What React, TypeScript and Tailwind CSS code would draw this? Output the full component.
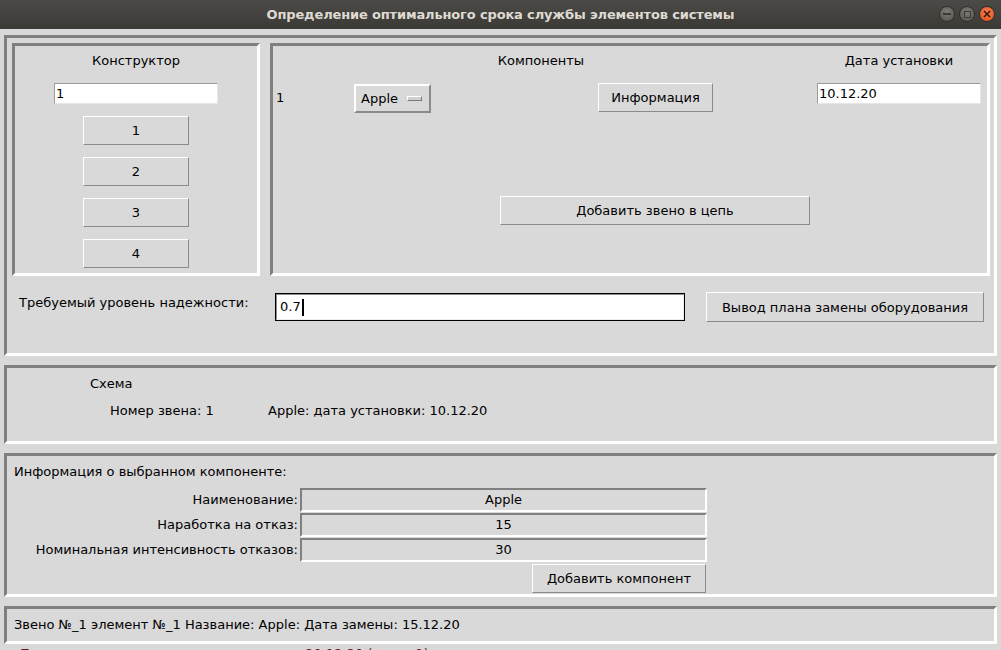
const font = "font-['DejaVu_Sans',sans-serif] text-[13px] text-black";
const sunken = "border-[3px] border-t-[#808080] border-l-[#808080] border-r-white border-b-white";
const raised = "border border-t-white border-l-white border-r-[#8a8a8a] border-b-[#8a8a8a] bg-[#d9d9d9] flex items-center justify-center leading-none";
const entry = "border border-t-[#9c9c9c] border-l-[#9c9c9c] border-r-[#e6e6e6] border-b-[#e6e6e6] bg-white pl-[1px] leading-[19px]";
const field = "border-[2px] border-t-[#808080] border-l-[#808080] border-r-white border-b-white flex items-center justify-center";

const WinButton = ({ kind }: { kind: "min" | "max" | "close" }) => {
  const bg =
    kind === "close"
      ? "bg-[radial-gradient(circle_at_50%_35%,#f47a4a,#e4521e)]"
      : "bg-[radial-gradient(circle_at_50%_35%,#7b7a75,#55544f)]";
  return (
    <div className={`w-[16px] h-[16px] rounded-full ${bg} border border-[#2f2e2b] flex items-center justify-center`}>
      {kind === "min" && <div className="w-[8px] h-[2px] bg-[#3a3935]" />}
      {kind === "max" && <div className="w-[7px] h-[7px] border border-[#3a3935]" />}
      {kind === "close" && (
        <svg width="8" height="8" viewBox="0 0 8 8">
          <path d="M1 1L7 7M7 1L1 7" stroke="#3a1a0e" strokeWidth="1.6" />
        </svg>
      )}
    </div>
  );
};

const App = () => {
  return (
    <div className={`w-[1001px] h-[650px] overflow-hidden bg-[#d9d9d9] ${font}`}>
      {/* title bar */}
      <div className="h-[29px] bg-[linear-gradient(#4b4a46,#3b3a36)] flex items-center relative">
        <div className="flex-1 text-center font-['DejaVu_Sans',sans-serif] font-bold text-[13px] text-[#dfdbd2] tracking-[-0.15px]">
          Определение оптимального срока службы элементов системы
        </div>
        <div className="absolute right-[6px] top-[6px] flex gap-[4px]">
          <WinButton kind="min" />
          <WinButton kind="max" />
          <WinButton kind="close" />
        </div>
      </div>

      <div className="px-[4px] pt-[6px] flex flex-col gap-[9px]">
        {/* section 1 */}
        <div className={`h-[321px] ${sunken} pt-[5px] pl-[5px]`}>
          <div className="flex gap-[10px]">
            <div className={`w-[248px] h-[233px] ${sunken} flex flex-col items-center pt-[7px]`}>
              <div className="leading-[16px]">Конструктор</div>
              <div className={`mt-[14px] w-[164px] h-[21px] ${entry}`}>1</div>
              <div className="mt-[12px] flex flex-col gap-[12px]">
                {["1", "2", "3", "4"].map((n) => (
                  <div key={n} className={`w-[106px] h-[29px] ${raised}`}>
                    {n}
                  </div>
                ))}
              </div>
            </div>
            <div className={`w-[720px] h-[233px] ${sunken} pt-[7px]`}>
              <div className="flex leading-[16px]">
                <div className="ml-[180px] w-[176px] text-center">Компоненты</div>
                <div className="ml-[188px] w-[164px] text-center">Дата установки</div>
              </div>
              <div className="mt-[14px] flex items-start">
                <div className="ml-[3px] w-[78px] mt-[7px] leading-[16px]">1</div>
                <div className="mt-[1px] w-[77px] h-[29px] border-2 border-t-white border-l-white border-r-[#8a8a8a] border-b-[#8a8a8a] flex items-center pl-[5px] gap-[9px] leading-none">
                  <span>Apple</span>
                  <div className="w-[15px] h-[5px] border border-t-white border-l-white border-r-[#7a7a7a] border-b-[#7a7a7a] bg-[#cfcfcf]" />
                </div>
                <div className={`ml-[167px] w-[115px] h-[29px] ${raised}`}>Информация</div>
                <div className={`ml-[104px] w-[164px] h-[21px] ${entry}`}>10.12.20</div>
              </div>
              <div className={`mt-[83px] ml-[227px] w-[310px] h-[29px] ${raised}`}>Добавить звено в цепь</div>
            </div>
          </div>
          <div className="mt-[16px] flex items-start pl-[7px]">
            <div className="w-[256px] mt-[3px] leading-[16px]">Требуемый уровень надежности:</div>
            <div className="mt-[1px] w-[410px] h-[28px] border border-black bg-white">
              <div className="h-full border border-t-[#8c8c8c] border-l-[#8c8c8c] border-r-[#ececec] border-b-[#ececec] flex items-center pl-[3px]">
                <span>0.7</span>
                <div className="w-[2px] h-[17px] bg-black ml-[1px]" />
              </div>
            </div>
            <div className={`ml-[21px] w-[278px] h-[30px] ${raised}`}>Вывод плана замены оборудования</div>
          </div>
        </div>

        {/* section 2 */}
        <div className={`h-[79px] ${sunken} pt-[8px] pl-[83px] leading-[16px]`}>
          <div>Схема</div>
          <div className="mt-[11px] flex">
            <div className="ml-[20px] w-[158px]">Номер звена: 1</div>
            <div>Apple: дата установки: 10.12.20</div>
          </div>
        </div>

        {/* section 3 */}
        <div className={`h-[144px] ${sunken} pt-[8px] pl-[7px] leading-[16px]`}>
          <div>Информация о выбранном компоненте:</div>
          <div className="mt-[8px] flex flex-col gap-[1px]">
            {[
              ["Наименование:", "Apple"],
              ["Наработка на отказ:", "15"],
              ["Номинальная интенсивность отказов:", "30"],
            ].map(([label, value]) => (
              <div key={label} className="flex items-center">
                <div className="w-[284px] text-right">{label}</div>
                <div className={`ml-[2px] w-[407px] h-[24px] ${field}`}>{value}</div>
              </div>
            ))}
          </div>
          <div className={`mt-[2px] ml-[518px] w-[174px] h-[29px] ${raised}`}>Добавить компонент</div>
        </div>

        {/* section 4 */}
        <div className={`h-[38px] ${sunken} flex items-center pl-[7px]`}>
          Звено №_1 элемент №_1 Название: Apple: Дата замены: 15.12.20
        </div>
      </div>
      <div className="pl-[20px] pt-[2px] text-[#5a1c1c] leading-[16px]">
        Последовательность замены элементов: 20.12.20 (звено 1)
      </div>
    </div>
  );
};

export default App;
